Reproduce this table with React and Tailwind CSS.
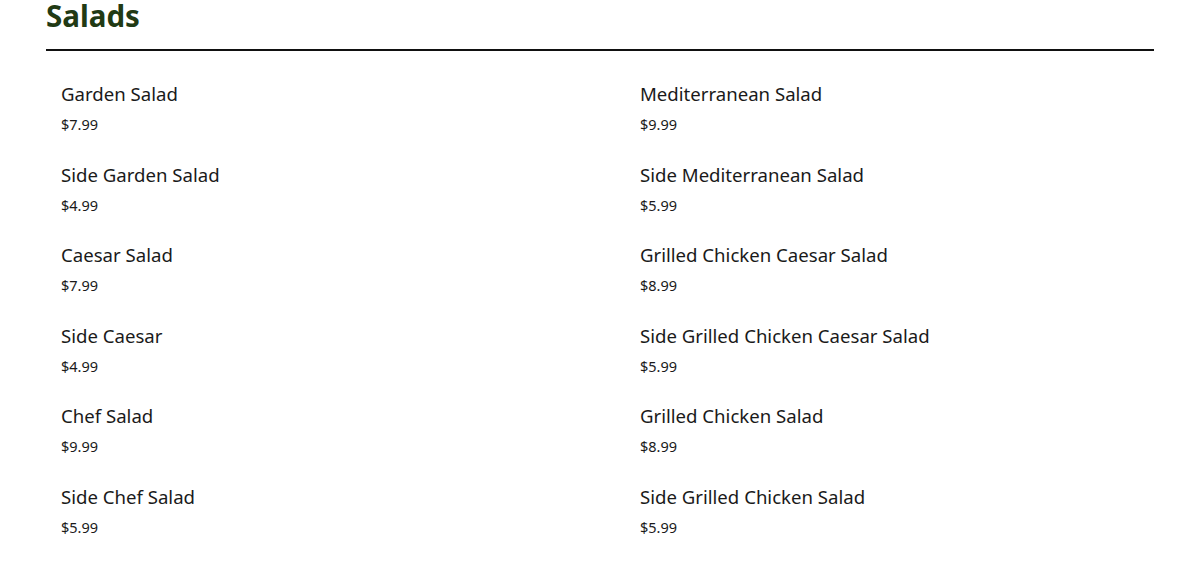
const left = [
  { name: "Garden Salad", price: "$7.99" },
  { name: "Side Garden Salad", price: "$4.99" },
  { name: "Caesar Salad", price: "$7.99" },
  { name: "Side Caesar", price: "$4.99" },
  { name: "Chef Salad", price: "$9.99" },
  { name: "Side Chef Salad", price: "$5.99" },
];

const right = [
  { name: "Mediterranean Salad", price: "$9.99" },
  { name: "Side Mediterranean Salad", price: "$5.99" },
  { name: "Grilled Chicken Caesar Salad", price: "$8.99" },
  { name: "Side Grilled Chicken Caesar Salad", price: "$5.99" },
  { name: "Grilled Chicken Salad", price: "$8.99" },
  { name: "Side Grilled Chicken Salad", price: "$5.99" },
];

function MenuItem({ item }) {
  return (
    <div className="h-[80.5px]">
      <div className="text-[18.6px] leading-[26px] text-[#1a1a1a]">{item.name}</div>
      <div className="mt-[7px] text-[14.5px] leading-[20px] text-[#1a1a1a]">{item.price}</div>
    </div>
  );
}

export default function App() {
  return (
    <div className="min-h-screen bg-white px-[46px] font-['Noto_Sans',_sans-serif] text-black" style={{ width: 1200 }}>
      {/* Section header */}
      <div className="border-b-2 border-[#111] pb-[17px]">
        <h2 className="text-[29.5px] leading-[32px] font-bold text-[#213a14]">Salads</h2>
      </div>

      {/* Items */}
      <div className="grid grid-cols-[579px_1fr] pl-[15px] pt-[30px]">
        <div className="flex flex-col">
          {left.map((item) => (
            <MenuItem key={item.name} item={item} />
          ))}
        </div>
        <div className="flex flex-col">
          {right.map((item) => (
            <MenuItem key={item.name} item={item} />
          ))}
        </div>
      </div>
    </div>
  );
}
